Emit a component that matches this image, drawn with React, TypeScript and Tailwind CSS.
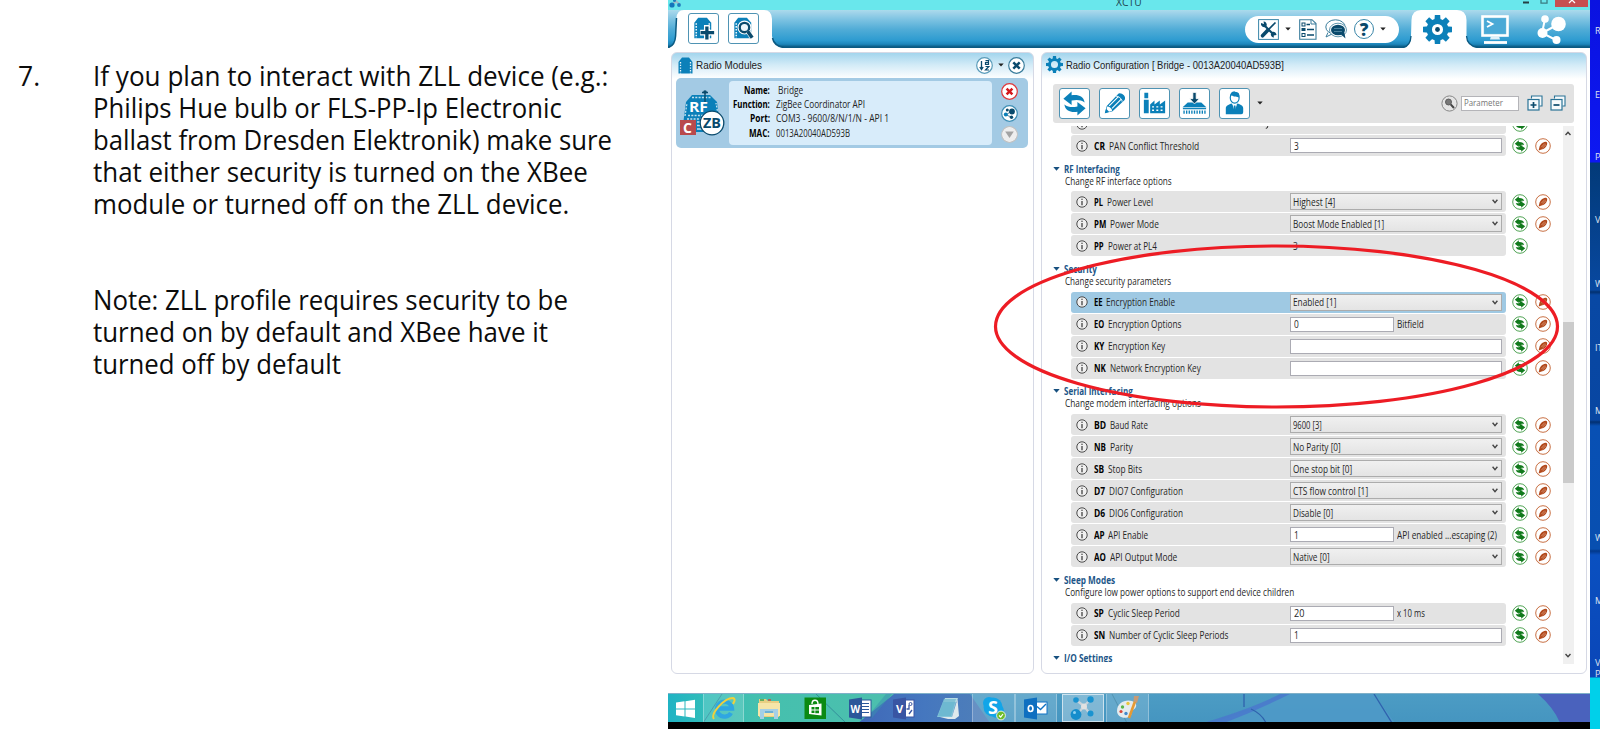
import { useLayoutEffect, useRef, type ReactNode } from 'react';

/** Single-line text condensed or widened horizontally to an exact width. */
function Fit({ w, children, className = '' }: { w: number; children: ReactNode; className?: string }) {
  const ref = useRef<HTMLSpanElement>(null);
  useLayoutEffect(() => {
    const el = ref.current;
    if (el) el.style.transform = `scaleX(${w / el.offsetWidth})`;
  }, [w]);
  return (
    <span className={`block shrink-0 whitespace-pre ${className}`} style={{ width: w }}>
      <span ref={ref} className="inline-block origin-left whitespace-pre">{children}</span>
    </span>
  );
}

const BLUE = '#0b80b9';
const NAVY = '#0a4a6c';

function Gear({ size, hole = 4.6, dot = false }: { size: number; hole?: number; dot?: boolean }) {
  return (
    <svg width={size} height={size} viewBox="-12 -12 24 24" className="shrink-0">
      {[0, 45, 90, 135, 180, 225, 270, 315].map((a) => (
        <path key={a} d="M-2.6 -7 L-2.2 -12 H2.2 L2.6 -7 Z" fill={BLUE} transform={`rotate(${a})`} />
      ))}
      <circle r={(9 + hole) / 2} fill="none" stroke={BLUE} strokeWidth={9 - hole} />
      {dot && <circle r="2" fill={NAVY} />}
    </svg>
  );
}

function Caret({ className = '' }: { className?: string }) {
  return (
    <svg width="6" height="4" viewBox="0 0 6 4" className={`shrink-0 ${className}`}>
      <path d="M0.3 0.5 H5.7 L3 3.6 Z" fill="#222" />
    </svg>
  );
}

function Chip() {
  return (
    <g>
      <path d="M5.500 25 V9 L9.500 3.800 H18.500 L23 9 V25 Z" fill={BLUE} />
      <path d="M7.500 9.500 V25 M21 9.500 V25" stroke="#e8f4fa" strokeWidth="1.6" strokeDasharray="1.6 1.4" />
    </g>
  );
}

function ToolButton({ children }: { children: ReactNode }) {
  return (
    <div className="h-[31px] w-[31px] shrink-0 rounded-[3px] border border-[#4f93b3] bg-white">
      <svg width="29" height="29" viewBox="0 0 30 30">{children}</svg>
    </div>
  );
}

function InfoIcon() {
  return (
    <svg width="12" height="12" viewBox="0 0 12 12" className="shrink-0">
      <circle cx="6" cy="6" r="5.2" fill="#f0f0f0" stroke="#4a4a4a" strokeWidth="1" />
      <path d="M6 5 V9.200" stroke="#333" strokeWidth="1.200" fill="none" />
      <rect x="5.4" y="2.700" width="1.200" height="1.200" fill="#333" />
    </svg>
  );
}

function RefreshIcon() {
  return (
    <svg width="16" height="16" viewBox="0 0 16 16" className="shrink-0">
      <circle cx="8" cy="8" r="7.3" fill="#fff" stroke="#3d9a42" strokeWidth="0.9" />
      <path d="M2.800 5.700 L6.800 2.300 V4 C9.800 3.900 11.800 4.800 12.200 7 C10.500 6.500 8.600 6.800 8.400 7.300 L11.500 8 L7.600 8 L6.800 7.400 V9 Z" fill="#117a1c" />
      <path d="M13.200 10.300 L9.200 13.700 V12 C6.200 12.100 4.200 11.200 3.800 9 C5.500 9.500 7.400 9.200 7.600 8.700 L7 7.400 L9.200 7.600 Z" fill="#117a1c" />
    </svg>
  );
}

function WriteIcon() {
  return (
    <svg width="16" height="16" viewBox="0 0 16 16" className="shrink-0">
      <circle cx="8" cy="8" r="7.3" fill="#fff" stroke="#c2602f" strokeWidth="0.9" />
      <path d="M3.600 12.500 L4.300 9.800 C4.600 7 7.500 4 10.300 3.700 C12.300 3.500 12.500 5 12 6.700 C11.200 9.300 9 11.300 6.500 11.500 Z" fill="#b1491c" />
      <path d="M6.300 9.200 L9.800 5.600 M7.500 10 L11 6.600" stroke="#eebfa6" strokeWidth="0.6" />
    </svg>
  );
}

type Field = {
  code: string;
  cw: number;
  name: string;
  nw: number;
  kind: 'select' | 'input' | 'short' | 'plain';
  value?: string;
  vw?: number;
  unit?: string;
  uw?: number;
  active?: boolean;
};

function Row({ f }: { f: Field }) {
  return (
    <div className="flex h-[22px] shrink-0 items-center pl-[18px]">
      <div
        className={`flex h-[21px] w-[435px] shrink-0 items-center rounded-[3px] pl-[5.5px] ${
          f.active ? 'bg-[#9fc9e3]' : 'bg-[#e3e3e3]'
        }`}
      >
        <InfoIcon />
        <div className="ml-[6px] flex w-[195.5px] shrink-0 gap-[3.5px]">
          <Fit w={f.cw} className="font-bold text-black">{f.code}</Fit>
          <Fit w={f.nw}>{f.name}</Fit>
        </div>
        {f.kind === 'select' && (
          <div className="flex h-[17px] w-[212px] items-center justify-between border border-[#acacac] bg-linear-to-b from-[#f0f0f0] to-[#e4e4e4] pr-[3px] pl-[2px]">
            <Fit w={f.vw!}>{f.value}</Fit>
            <svg width="6" height="5" viewBox="0 0 6 5">
              <path d="M0.6 0.8 L3 3.6 L5.4 0.8" fill="none" stroke="#444" strokeWidth="1.4" />
            </svg>
          </div>
        )}
        {f.kind === 'input' && (
          <div className="flex h-[15px] w-[212px] items-center border border-[#ababb3] bg-white pl-[3px]">
            {f.value && <Fit w={f.vw!}>{f.value}</Fit>}
          </div>
        )}
        {f.kind === 'short' && (
          <>
            <div className="flex h-[15px] w-[104px] items-center border border-[#ababb3] bg-white pl-[3px]">
              <Fit w={f.vw!}>{f.value}</Fit>
            </div>
            <Fit w={f.uw!} className="ml-[3.5px]">{f.unit}</Fit>
          </>
        )}
        {f.kind === 'plain' && <Fit w={f.vw!} className="ml-[3px]">{f.value}</Fit>}
      </div>
      <div className="ml-[6.5px] flex gap-[6.500px]">
        <RefreshIcon />
        {f.kind !== 'plain' && <WriteIcon />}
      </div>
    </div>
  );
}

/** The row above the visible range, of which only the lower edge shows. */
function ScrolledRow() {
  return (
    <div className="flex h-[22px] shrink-0 items-center pl-[18px]">
      <div className="flex h-[21px] w-[435px] shrink-0 items-center rounded-[3px] bg-[#e3e3e3] pl-[5.5px]">
        <InfoIcon />
        <svg width="4" height="12" viewBox="0 0 4 12" className="ml-[177px]">
          <path d="M3.500 6 L2.200 10 L0.800 10.300" fill="none" stroke="#333" />
        </svg>
      </div>
      <div className="ml-[6.500px]"><RefreshIcon /></div>
    </div>
  );
}

function Section({ title, tw, sub, sw, fields = [] }: { title: string; tw: number; sub?: string; sw?: number; fields?: Field[] }) {
  return (
    <>
      <div className="h-[34.4px] shrink-0 pt-[6px]">
        <div className="flex h-[12px] items-center gap-[4.5px]">
          <svg width="7" height="4" viewBox="0 0 7 4"><path d="M0.3 0 H6.7 L3.5 3.8 Z" fill="#17507f" /></svg>
          <Fit w={tw} className="font-bold text-[#1c5688]">{title}</Fit>
        </div>
        {sub && <Fit w={sw!} className="ml-[12.5px] leading-[12px]">{sub}</Fit>}
      </div>
      {fields.map((f) => <Row key={f.code} f={f} />)}
    </>
  );
}

const RF: Field[] = [
  { code: 'PL', cw: 9, name: 'Power Level', nw: 46, kind: 'select', value: 'Highest [4]', vw: 42 },
  { code: 'PM', cw: 12.5, name: 'Power Mode', nw: 49, kind: 'select', value: 'Boost Mode Enabled [1]', vw: 91 },
  { code: 'PP', cw: 10, name: 'Power at PL4', nw: 49, kind: 'plain', value: '3', vw: 5 },
];
const SECURITY: Field[] = [
  { code: 'EE', cw: 8.5, name: 'Encryption Enable', nw: 69, kind: 'select', value: 'Enabled [1]', vw: 43, active: true },
  { code: 'EO', cw: 10.5, name: 'Encryption Options', nw: 73, kind: 'short', value: '0', vw: 5, unit: 'Bitfield', uw: 27 },
  { code: 'KY', cw: 10.5, name: 'Encryption Key', nw: 57, kind: 'input' },
  { code: 'NK', cw: 12, name: 'Network Encryption Key', nw: 91, kind: 'input' },
];
const SERIAL: Field[] = [
  { code: 'BD', cw: 12, name: 'Baud Rate', nw: 38, kind: 'select', value: '9600 [3]', vw: 29 },
  { code: 'NB', cw: 12, name: 'Parity', nw: 23, kind: 'select', value: 'No Parity [0]', vw: 48 },
  { code: 'SB', cw: 10, name: 'Stop Bits', nw: 34, kind: 'select', value: 'One stop bit [0]', vw: 59 },
  { code: 'D7', cw: 11, name: 'DIO7 Configuration', nw: 74, kind: 'select', value: 'CTS flow control [1]', vw: 75 },
  { code: 'D6', cw: 11, name: 'DIO6 Configuration', nw: 74, kind: 'select', value: 'Disable [0]', vw: 40 },
  { code: 'AP', cw: 10.5, name: 'API Enable', nw: 40, kind: 'short', value: '1', vw: 5, unit: 'API enabled ...escaping (2)', uw: 100 },
  { code: 'AO', cw: 12, name: 'API Output Mode', nw: 67, kind: 'select', value: 'Native [0]', vw: 37 },
];
const SLEEP: Field[] = [
  { code: 'SP', cw: 10, name: 'Cyclic Sleep Period', nw: 72, kind: 'short', value: '20', vw: 10, unit: 'x 10 ms', uw: 28 },
  { code: 'SN', cw: 11.5, name: 'Number of Cyclic Sleep Periods', nw: 119.5, kind: 'input', value: '1', vw: 5 },
];

const NOTE: [string, number][] = [
  ['If you plan to interact with ZLL device (e.g.:', 515],
  ['Philips Hue bulb or FLS-PP-Ip Electronic', 469],
  ['ballast from Dresden Elektronik) make sure', 518.5],
  ['that either security is turned on the XBee', 495],
  ['module or turned off on the ZLL device.', 476],
];
const NOTE2: [string, number][] = [
  ['Note: ZLL profile requires security to be', 475],
  ['turned on by default and XBee have it', 454.5],
  ['turned off by default', 248],
];

function Slide() {
  return (
    <div className="flex w-[668px] shrink-0 pt-[60px] pl-[18px] font-['Open_Sans',sans-serif] text-[26.5px] leading-[32px] text-[#0c0c0c]">
      <Fit w={22}>7.</Fit>
      <div className="ml-[53px]">
        {NOTE.map(([t, w]) => <Fit key={t} w={w}>{t}</Fit>)}
        <div className="h-[64px]" />
        {NOTE2.map(([t, w]) => <Fit key={t} w={w}>{t}</Fit>)}
      </div>
    </div>
  );
}

function TitleBar() {
  return (
    <div className="relative flex h-[10px] shrink-0 overflow-hidden bg-[#69e7ec]">
      <svg width="14" height="8" viewBox="0 0 14 8" className="ml-px">
        <path d="M3 5 L7 1 L11 5" stroke="#9fb9c4" strokeWidth="2" fill="none" />
        <circle cx="3" cy="5" r="2.6" fill="#1376ba" /><circle cx="10" cy="5" r="1.9" fill="#1d7fbf" /><circle cx="5.500" cy="0.500" r="1.500" fill="#1d7fbf" />
      </svg>
      <Fit w={26} className="-mt-[7px] ml-[433px] font-['Open_Sans',sans-serif] text-[11.5px] leading-[18px] text-[#1f4a52]">XCTU</Fit>
      <svg width="30" height="8" viewBox="0 0 30 8" className="ml-[380px]">
        <path d="M1 2.5 H7" stroke="#243f44" strokeWidth="2" />
        <path d="M19 0 V3.2 H25 V0" fill="none" stroke="#3a7d82" strokeWidth="1.3" />
      </svg>
      <div className="ml-[3px] flex h-[7px] w-[33px] justify-center bg-[#c75050]">
        <svg width="8" height="4" viewBox="0 0 8 4"><path d="M1 3 L4 0 L7 3" fill="none" stroke="#fff" strokeWidth="1.3" /></svg>
      </div>
    </div>
  );
}

function Ribbon() {
  return (
    <div className="flex h-[38px] shrink-0 bg-[linear-gradient(#a9dcec_0%,#a3d5ea_5%,#7dc3e2_25%,#52add7_50%,#2d9bd0_80%,#1d86bb_90%,#0b5a82_97%,#0b5a82_100%)]">
      <div className="relative flex w-[116px] shrink-0 gap-[9px] pt-[3px] pl-[20px]">
        <svg width="116" height="38" viewBox="0 0 116 38" className="absolute top-0 left-0">
          <path d="M0 38 Q7 36 7.6 26 L8.5 8 Q9 0 16 0 H96 Q103.500 0 104 9 V26 Q105 36 116 38 Z" fill="#fff" />
          <path d="M0 37.500 Q7 36 7.600 26 L8.500 8" fill="none" stroke="#0b5a82" strokeWidth="1.500" />
          <path d="M104.500 28 Q106 36 116 37.500" fill="none" stroke="#0b5a82" strokeWidth="1.500" />
        </svg>
        <div className="relative">
          <ToolButton>
            <Chip />
            <path d="M18.500 11.500 V26.500 M11.500 19.200 H26.500" stroke="#fff" strokeWidth="6" />
            <path d="M18.500 13 V26.500 M12 19.200 H26" stroke={NAVY} strokeWidth="3.400" />
          </ToolButton>
        </div>
        <div className="relative">
          <ToolButton>
            <Chip />
            <circle cx="16" cy="14" r="5" fill="#dff0f8" stroke="#fff" strokeWidth="4.500" />
            <circle cx="16" cy="14" r="4.900" fill="#eef7fb" stroke={NAVY} strokeWidth="2.400" />
            <path d="M19.500 18 L24.500 24.800" stroke="#fff" strokeWidth="5" />
            <path d="M19.300 17.800 L24 24.500" stroke={NAVY} strokeWidth="3.600" />
          </ToolButton>
        </div>
      </div>
      <div className="mt-[5.5px] ml-[460.5px] flex h-[27.500px] w-[154.5px] shrink-0 items-center rounded-full bg-white pl-[13.5px]">
        <svg width="21" height="21" viewBox="0 0 21 21">
          <rect x="0.600" y="0.600" width="19.800" height="19.800" fill="#fff" stroke="#3a86a8" />
          <path d="M5.500 5.500 L16 16" stroke={NAVY} strokeWidth="2.200" />
          <path d="M17.500 3.500 L10 11" stroke={NAVY} strokeWidth="1.700" />
          <path d="M10 11 L4.500 16.800" stroke={NAVY} strokeWidth="3.600" strokeLinecap="round" />
          <path d="M3 4 A3.200 3.200 0 0 0 8.500 7 A3.200 3.200 0 0 0 5.500 2.500 L6 5 Z" fill={NAVY} />
          <path d="M12.800 15 A3.200 3.200 0 0 0 16 18.500 L15.500 16.500 L18.500 16 A3.200 3.200 0 0 0 14.500 12.800 Z" fill={NAVY} />
        </svg>
        <Caret className="ml-[6px]" />
        <svg width="18" height="21" viewBox="0 0 18 21" className="ml-[8px]">
          <path d="M0.700 0.700 H13 L17 4.500 V20.300 H0.700 Z" fill="#fff" stroke="#3a7d9c" strokeWidth="1.100" />
          <path d="M12 0.700 V5 H17" fill="none" stroke="#3a7d9c" />
          <path d="M7.500 5.500 H11 M8 10.500 H15 M8 16 H15" stroke={NAVY} strokeWidth="1.400" />
          <rect x="3" y="4" width="3" height="3" fill="none" stroke={NAVY} /><rect x="2.500" y="9" width="4" height="3" fill={NAVY} /><rect x="3" y="14.500" width="3" height="3" fill="none" stroke={NAVY} />
        </svg>
        <svg width="22" height="20" viewBox="0 0 22 20" className="ml-[8px]">
          <ellipse cx="10.500" cy="8" rx="9.700" ry="7.200" fill="#fff" stroke="#3a7d9c" />
          <path d="M3 13.500 L1 18 L7 15" fill="#fff" stroke="#3a7d9c" />
          <ellipse cx="13" cy="11" rx="8.500" ry="6.800" fill="#fff" stroke="#3a7d9c" strokeWidth="0.800" />
          <ellipse cx="13" cy="11" rx="7" ry="5.300" fill={NAVY} />
          <path d="M15 14.500 L20.500 19.500 L19 12 Z" fill={NAVY} />
          <path d="M9 9.500 H17 M9 12.500 H17" stroke="#5d90aa" strokeWidth="0.800" />
        </svg>
        <div className="ml-[7px] flex h-[20px] w-[20px] items-center justify-center rounded-full border border-[#3a86a8] font-['Open_Sans',sans-serif] text-[17px] leading-none font-extrabold text-[#0a4a6c]">?</div>
        <Caret className="ml-[6px]" />
      </div>
      <div className="relative ml-[4px] w-[75px] shrink-0">
        <svg width="75" height="38" viewBox="0 0 75 38" className="absolute top-0 left-0">
          <path d="M0 38 Q7.500 36 8 26 L8.500 10 Q9 0 18 0 H54 Q63 0 63.500 10 V26 Q64 36 75 38 Z" fill="#fff" />
          <path d="M0 37.500 Q7.500 36 8 26 M63.500 26 Q64 36 75 37.500" fill="none" stroke="#0b5a82" strokeWidth="1.300" />
        </svg>
        <div className="relative mt-[5px] ml-[19.500px]"><Gear size={29} hole={4.600} dot /></div>
      </div>
      <svg width="28" height="30" viewBox="0 0 28 30" className="mt-[5px] ml-[2.500px] shrink-0">
        <rect x="1.500" y="1.500" width="25" height="19" fill="#5fb3d8" stroke="#fff" strokeWidth="2.600" />
        <rect x="3.500" y="3.500" width="21" height="15" fill="#4aa9d6" />
        <path d="M6 6 L11.500 9 L6 12" fill="none" stroke="#fff" strokeWidth="1.800" />
        <path d="M10 21 L9 24.500 H19 L18 21 Z" fill="#dff0f8" /><path d="M3 27.500 H26" stroke="#fff" strokeWidth="2.800" />
      </svg>
      <svg width="30" height="30" viewBox="0 0 30 30" className="mt-[5px] ml-[28px] shrink-0">
        <path d="M8 4 L5 18 L19 25 M5 18 L22 9" stroke="#fff" strokeWidth="2" fill="none" />
        <circle cx="8" cy="4" r="3.800" fill="#fff" /><circle cx="21.500" cy="9" r="7.300" fill="#fff" />
        <circle cx="5.500" cy="18" r="5" fill="#fff" /><circle cx="19.500" cy="25" r="4" fill="#fff" />
      </svg>
    </div>
  );
}

function RoundIcon({ color, children }: { color: string; children: ReactNode }) {
  return (
    <svg width="17" height="17" viewBox="0 0 17 17" className="shrink-0">
      <circle cx="8.500" cy="8.500" r="7.800" fill="#fff" stroke={color} strokeWidth="1.200" />
      {children}
    </svg>
  );
}

function ModulesPanel() {
  return (
    <div className="flex h-[622px] w-[363px] shrink-0 flex-col rounded-[6px] border-[1.5px] border-[#d6d9e5] bg-[linear-gradient(#a2d5ed_0px,#d3ebf7_12px,#fff_26px)] px-[4px]">
      <div className="flex h-[25px] shrink-0 items-center">
        <svg width="15" height="17" viewBox="0 0 15 17" className="ml-[2px] shrink-0">
          <path d="M0.500 16.500 V5 L4 0.500 H11 L14.500 5 V16.500 Z" fill={BLUE} />
          <path d="M2.500 5 V16.500 M12.500 5 V16.500" stroke="#e8f4fa" strokeWidth="1.300" strokeDasharray="1.400 1.300" />
        </svg>
        <Fit w={66} className="ml-[3px] font-['Liberation_Sans',sans-serif] text-[10.5px] text-[#222]">Radio Modules</Fit>
        <div className="-mt-px ml-auto flex items-center">
          <RoundIcon color="#5a9cba">
            <path d="M5.500 4 V12 M3.800 10 L5.500 12.500 L7.200 10" stroke={NAVY} strokeWidth="1.300" fill="none" />
            <path d="M9.500 3.600 H12.500 V7.300 H9.500 V5.500 H12.500 M9.500 9.500 H12.800 L9.500 13 H13" stroke={NAVY} strokeWidth="1.200" fill="none" />
          </RoundIcon>
          <Caret className="ml-[5px]" />
          <div className="mr-[4px] ml-[4.5px]">
            <RoundIcon color="#3a7d9c"><path d="M5.300 5.300 L11.700 11.700 M11.700 5.300 L5.300 11.700" stroke={NAVY} strokeWidth="2.500" /></RoundIcon>
          </div>
        </div>
      </div>
      <div className="flex h-[70px] w-[352px] shrink-0 rounded-[5px] bg-[#a3cae4] py-[3px] font-['Open_Sans',sans-serif]">
        <svg width="46" height="46" viewBox="0 0 46 46" className="mt-[9px] ml-[2.5px] shrink-0">
          <path d="M3 42 L7 12 L13 5 H31 L38 12 L42 42 Z" fill={BLUE} />
          <path d="M6 26 L8 13 M39 24 L37 13 M13 7.500 H32 M9 25.500 H29 M8 29 H22" stroke="#c3e0ee" strokeWidth="1.300" strokeDasharray="2 1.300" />
          <path d="M18 32 H24 M18 35.500 H24 M18 39 H24" stroke="#c3e0ee" strokeWidth="1.300" />
          <path d="M26 14 V2 M23 2.500 H29" stroke={NAVY} strokeWidth="1.400" /><circle cx="26" cy="2" r="1.800" fill={NAVY} />
          <text x="10" y="22" fontFamily="Open Sans" fontWeight="700" fontSize="13.500" fill="#fff" textLength="19" lengthAdjust="spacingAndGlyphs">RF</text>
          <rect x="1" y="30" width="16" height="15" fill="#b94a4c" />
          <text x="4" y="43" fontFamily="Open Sans" fontWeight="700" fontSize="14" fill="#fff">C</text>
          <circle cx="33" cy="33" r="11.800" fill="#fff" stroke={NAVY} strokeWidth="1.300" />
          <text x="24" y="38" fontFamily="Open Sans" fontWeight="700" fontSize="13.500" fill={NAVY} textLength="18" lengthAdjust="spacingAndGlyphs">ZB</text>
        </svg>
        <div className="ml-[4.5px] flex h-[64px] w-[263px] gap-[5.5px] rounded-[4px] bg-[#d8ecfa] pt-[2px] pl-[4px] text-[10px] leading-[14.200px] text-[#222]">
          <div className="flex w-[37px] flex-col items-end font-bold text-black">
            <Fit w={26}>Name:</Fit><Fit w={37}>Function:</Fit><Fit w={20}>Port:</Fit><Fit w={21}>MAC:</Fit>
          </div>
          <div>
            <Fit w={25} className="ml-[2px]">Bridge</Fit><Fit w={89}>ZigBee Coordinator API</Fit><Fit w={113}>COM3 - 9600/8/N/1/N - API 1</Fit><Fit w={74}>0013A20040AD593B</Fit>
          </div>
        </div>
        <div className="ml-[9px] flex flex-col gap-[4.5px] pt-[2px]">
          <RoundIcon color="#e0383a"><path d="M5.600 5.600 L11.400 11.400 M11.400 5.600 L5.600 11.400" stroke="#d3181c" strokeWidth="2.500" /></RoundIcon>
          <RoundIcon color="#3f8fb5">
            <path d="M5 10 L10.500 6 M5 10 L10.500 12" stroke={NAVY} strokeWidth="0.700" />
            <circle cx="6.300" cy="5" r="1.500" fill={NAVY} /><circle cx="11" cy="6.500" r="2.900" fill={NAVY} />
            <circle cx="4.800" cy="9.600" r="2" fill={BLUE} /><circle cx="10.500" cy="12.300" r="1.700" fill={NAVY} />
          </RoundIcon>
          <RoundIcon color="#c2c2c2"><circle cx="8.500" cy="8.500" r="7" fill="#eee" /><path d="M4.200 5.500 H12.800 L8.500 12 Z" fill="#a3a3a3" /></RoundIcon>
        </div>
      </div>
    </div>
  );
}

function ConfigPanel() {
  return (
    <div className="flex h-[622px] w-[546px] shrink-0 flex-col rounded-[6px] border-[1.5px] border-[#d6d9e5] bg-[linear-gradient(#a2d5ed_0px,#d3ebf7_12px,#fff_26px)] pl-[10.5px]">
      <div className="-ml-[6.5px] flex h-[31px] shrink-0 items-start pt-[2.5px]">
        <Gear size={17} hole={5} />
        <Fit w={218} className="ml-[2.5px] font-['Liberation_Sans',sans-serif] text-[10.5px] leading-[18px] text-[#222]">Radio Configuration [ Bridge - 0013A20040AD593B]</Fit>
      </div>
      <div className="flex h-[38.500px] w-[521px] shrink-0 items-center rounded-[3px] bg-[#e2e2e2] pl-[6.5px]">
        <div className="flex gap-[9px]">
          <ToolButton>
            <path d="M3.500 10.500 L12 3 V7 C19 6 24.500 8 25.500 14.500 C21.500 11.500 17 11.500 12 12.500 V17 Z" fill={BLUE} transform="translate(0 -0.500)" />
            <path d="M26.500 19.500 L18 27 V23 C11 24 5.500 22 4.500 15.500 C8.500 18.500 13 18.500 18 17.500 V13 Z" fill={BLUE} transform="translate(0 0.500)" />
          </ToolButton>
          <ToolButton>
            <path d="M5 25 L7 17.500 L18.500 5.500 C20 2.500 28 6.500 25.500 11.500 L13 23 Z" fill={BLUE} />
            <path d="M9.500 17.500 L19 8 M12.500 20 L22 10.500" stroke="#fff" strokeWidth="1.100" />
            <path d="M16.500 7.500 C18.500 7 23 10 22.800 13" stroke="#fff" strokeWidth="1" fill="none" />
            <path d="M7.500 18 C10 18 12.500 20.500 12.500 22.500 L8 24 L6.500 22 Z" fill="#fff" /><path d="M5 25 L6.300 20.500 L9.500 23.500 Z" fill={BLUE} />
          </ToolButton>
          <ToolButton>
            <path d="M4 25 V11 H9 V25 Z M4.500 9.500 V4 H8.500 V9.500 Z" fill={BLUE} />
            <path d="M10.500 25 V16 L15 12 V16 L20.500 12 V16 L26 12 V25 Z" fill={BLUE} />
            <path d="M12.500 18.500 H24.500 M12.500 22 H24.500" stroke="#fff" strokeWidth="1.500" strokeDasharray="2 2.400" />
          </ToolButton>
          <ToolButton>
            <path d="M3 18.500 L8 14 H22 L27 18.500 V21 H3 Z" fill={BLUE} />
            <path d="M3.500 24 H26.500" stroke={BLUE} strokeWidth="3.400" strokeDasharray="1.400 1.300" />
            <path d="M3 19.200 H27" stroke="#fff" strokeWidth="0.700" />
            <path d="M13.300 3.500 H16.700 V10 H20 L15 15.500 L10 10 H13.300 Z" fill={NAVY} stroke="#fff" strokeWidth="0.800" />
          </ToolButton>
          <ToolButton>
            <path d="M6 26 V20 C6 17 9.500 16 12 15 L15 19 L18 15 C21 16 24 17 24 20 V24 Q24 26 22 26 Z" fill={BLUE} />
            <path d="M13 16 L15 23 L17.500 16 Z" fill="#fff" /><path d="M14.300 17 H16 L16.500 22 L15.200 24 L14 22 Z" fill={BLUE} />
            <ellipse cx="15.200" cy="9" rx="4.600" ry="5.600" fill="#fff" stroke={BLUE} strokeWidth="1.200" />
            <path d="M10.500 9 C10 3 14 2 16 3 C20 3 20.500 6 19.800 9 C18 7.500 14 8.500 12 6.500 Z" fill={BLUE} />
          </ToolButton>
        </div>
        <Caret className="ml-[7px]" />
        <svg width="17" height="17" viewBox="0 0 17 17" className="ml-[177.500px]">
          <circle cx="8.500" cy="8.500" r="7.600" fill="#e4e4e4" stroke="#888" />
          <circle cx="7.500" cy="7" r="3" fill="#777" stroke="#555" strokeWidth="0.900" /><path d="M9.700 9.300 L13 13" stroke="#444" strokeWidth="2" />
        </svg>
        <div className="ml-[3px] flex h-[15px] w-[58px] items-center border border-[#b4b4b8] bg-white pl-[2px] font-['Open_Sans',sans-serif] text-[9.5px] text-[#757575]"><Fit w={39}>Parameter</Fit></div>
        {['M3.500 10 H9.500 M6.500 7 V13', 'M3.500 10 H9.500'].map((d) => (
          <svg key={d} width="16" height="16" viewBox="0 0 16 16" className="ml-[8.5px] last:ml-[6.5px]">
            <path d="M4.500 3.500 V1 H15 V11 H12.500" fill="#f6fafc" stroke="#2a7396" strokeWidth="1.100" />
            <rect x="1" y="4.500" width="11" height="10.500" fill="#f6fafc" stroke="#2a7396" strokeWidth="1.200" />
            <path d={d} stroke={NAVY} strokeWidth="1.700" />
          </svg>
        ))}
      </div>
      <div className="mt-[3.5px] flex h-[538px] w-[521px] shrink-0 overflow-hidden font-['Open_Sans',sans-serif] text-[10px] leading-[12px] text-[#262626]">
        <div className="-mt-[13.500px] flex h-[549px] w-[510px] flex-col overflow-hidden">
          <ScrolledRow />
          <Row f={{ code: 'CR', cw: 11, name: 'PAN Conflict Threshold', nw: 90, kind: 'input', value: '3', vw: 5 }} />
          <Section title="RF Interfacing" tw={56} sub="Change RF interface options" sw={107} fields={RF} />
          <Section title="Security" tw={33} sub="Change security parameters" sw={106} fields={SECURITY} />
          <Section title="Serial Interfacing" tw={69} sub="Change modem interfacing options" sw={136} fields={SERIAL} />
          <Section title="Sleep Modes" tw={51} sub="Configure low power options to support end device children" sw={229} fields={SLEEP} />
          <Section title="I/O Settings" tw={48} />
        </div>
        <div className="flex w-[11px] flex-col items-center bg-[#f0f0f0] pt-[5px]">
          <svg width="6" height="5" viewBox="0 0 6 5" className="shrink-0"><path d="M0.500 4 L3 1.200 L5.500 4" fill="none" stroke="#444" strokeWidth="1.400" /></svg>
          <div className="mt-[186px] h-[161px] w-[11px] shrink-0 bg-[#cbcbcb]" />
          <svg width="6" height="5" viewBox="0 0 6 5" className="mt-[170px] shrink-0"><path d="M0.500 1 L3 3.800 L5.500 1" fill="none" stroke="#444" strokeWidth="1.400" /></svg>
        </div>
      </div>
    </div>
  );
}

function Task({ w, on = '', children }: { w: number; on?: string; children: ReactNode }) {
  return (
    <div className={`relative flex h-[28px] shrink-0 items-center justify-center ${on}`} style={{ width: w }}>
      <svg width="26" height="26" viewBox="0 0 26 26">{children}</svg>
    </div>
  );
}

function Taskbar() {
  const lit = 'border-x border-white/30 bg-white/15';
  return (
    <div className="relative flex h-[29px] shrink-0 overflow-hidden border-t border-[#7fb0c8]">
      <svg width="922" height="29" viewBox="0 0 922 29" className="absolute top-0 left-0">
        <defs>
          <linearGradient id="tb"><stop offset="0" stopColor="#20b3c4" /><stop offset="0.150" stopColor="#30bcba" /><stop offset="0.400" stopColor="#45c0ae" /><stop offset="1" stopColor="#4dbfae" /></linearGradient>
          <linearGradient id="tb2"><stop offset="0" stopColor="#3f68b8" /><stop offset="0.500" stopColor="#4577bf" /><stop offset="1" stopColor="#4f7fb8" /></linearGradient>
          <linearGradient id="tb3" x1="0" y1="0" x2="0" y2="1"><stop offset="0" stopColor="#4c9cc4" /><stop offset="1" stopColor="#4595c0" /></linearGradient>
        </defs>
        <rect width="922" height="29" fill="url(#tb3)" />
        <rect width="230" height="29" fill="url(#tb)" />
        <path d="M190 29 Q204 18 226 0 H302 L322 29 Z" fill="url(#tb2)" />
        <path d="M204 24 L224 0 H218 L200 22 Z" fill="#3a8fb0" opacity="0.500" />
        <path d="M35 29 L54 0 M148 0 L178 29 M444 0 L459 29" stroke="#27708f" strokeWidth="1" opacity="0.600" />
        <path d="M543 29 Q590 15 618 0 H706 L727 29 Z" fill="#4f9ac8" opacity="0.800" />
        <path d="M535 29 Q585 14 612 0 H622 Q590 16 556 29 Z" fill="#4a78cc" opacity="0.850" />
        <path d="M576 0 V13 M583 15 Q594 20 598 29 M706 0 L724 29" stroke="#2f62ad" strokeWidth="1.300" fill="none" />
        <path d="M870 0 Q886 14 892 29 H922 V0 Z" fill="#4a62bd" />
      </svg>
      <Task w={35}><path d="M3 7.500 L11.500 6.300 V13.400 H3 Z M12.500 6.200 L22 4.700 V13.400 H12.500 Z M3 14.400 H11.500 V21.500 L3 20.300 Z M12.500 14.400 H22 V23 L12.500 21.600 Z" fill="#fff" /></Task>
      <Task w={41} on={lit}>
        <path d="M20 18 A7.500 7.500 0 1 1 21 13.500 H8" fill="none" stroke="#2fa6e2" strokeWidth="4.300" />
        <path d="M3 24 C-1 19 13 3 22 3 C25 4 23 7 22 9" fill="none" stroke="#f0d03c" strokeWidth="2" />
      </Task>
      <Task w={50}>
        <path d="M3 4 H10 L12 6 H23 V22 H3 Z" fill="#e8cf82" /><path d="M2 8 H24 V21 H2 Z" fill="#f5e5a8" />
        <path d="M4 5 H8" stroke="#3da24e" strokeWidth="1.500" /><path d="M12 5 H15" stroke="#d3493c" strokeWidth="1.500" />
        <path d="M6 24 V16 H20 V24" fill="none" stroke="#a4cfe6" strokeWidth="4" /><path d="M9 17 H17" stroke="#5aa7d0" strokeWidth="1.500" />
      </Task>
      <Task w={42}>
        <rect x="2.500" y="2.500" width="21.500" height="21.500" fill="#0b8a12" /><path d="M7 10 L19.500 8.500 V20.500 L7 19 Z" fill="#fff" />
        <path d="M10 9 C10 4 16 4 16 9" fill="none" stroke="#fff" strokeWidth="1.400" />
        <path d="M9.500 12 H12.500 V14.500 H9.500 Z M13.300 12 H17 V14.500 H13.300 Z M9.500 15.400 H12.500 V18 H9.500 Z M13.300 15.400 H17 V18.300 H13.300 Z" fill="#0b8a12" />
      </Task>
      <Task w={48}>
        <rect x="12" y="5" width="12" height="17" fill="#fff" stroke="#2b579a" /><path d="M15 8.500 H22 M15 11.500 H22 M15 14.500 H22 M15 17.500 H22" stroke="#2b579a" strokeWidth="1.200" />
        <path d="M2 4.500 L15 2.500 V24.500 L2 22.500 Z" fill="#2b579a" />
        <text x="3.500" y="17.500" fontFamily="Open Sans" fontWeight="700" fontSize="10" fill="#fff">W</text>
      </Task>
      <Task w={42}>
        <rect x="12" y="5" width="10" height="17" fill="#fff" stroke="#3955a3" /><path d="M14.500 14 L17 14 V10 M17 19 L20 15" stroke="#3955a3" strokeWidth="1.300" fill="none" /><circle cx="18.500" cy="9" r="1.500" fill="none" stroke="#3955a3" />
        <path d="M1 4.500 L14 2.500 V24.500 L1 22.500 Z" fill="#3955a3" />
        <text x="4" y="17.500" fontFamily="Open Sans" fontWeight="700" fontSize="11" fill="#fff">V</text>
      </Task>
      <Task w={46}>
        <path d="M8 4 H21 L16 22 H1 Z" fill="#86c5da" /><path d="M9 3 H22 L20.500 7 H7.500 Z" fill="#b7dce4" /><path d="M4 22 H16 L21.500 4 L23 21 L19 24 H12 Z" fill="#dfe9ec" />
        <path d="M8 4 H20 L15 21 H2 Z" fill="#5fb0cc" opacity="0.600" />
      </Task>
      <Task w={43} on={lit}>
        <circle cx="8" cy="8" r="6" fill="#12a5e8" /><circle cx="16" cy="16" r="7" fill="#12a5e8" /><circle cx="12" cy="12" r="9.500" fill="#12a5e8" />
        <text x="7" y="18.500" fontFamily="Open Sans" fontWeight="700" fontSize="18" fill="#fff">S</text>
        <circle cx="20" cy="20.500" r="4.400" fill="#6fbd2b" stroke="#fff" strokeWidth="0.800" /><path d="M18 20.500 L19.700 22 L22 19" stroke="#fff" strokeWidth="1.200" fill="none" />
      </Task>
      <Task w={42} on={lit}>
        <rect x="12" y="7" width="12" height="12" fill="#fff" stroke="#1173c5" /><path d="M14 11.500 L17.500 14.500 L23 9" stroke="#1173c5" strokeWidth="1.400" fill="none" />
        <path d="M1 4.500 L14 2.500 V24.500 L1 22.500 Z" fill="#0f6fc0" />
        <ellipse cx="7.600" cy="13.500" rx="2.300" ry="3" fill="none" stroke="#fff" strokeWidth="1.700" />
      </Task>
      <div className="w-[5px] shrink-0" />
      <Task w={42} on="border border-white/60 bg-white/30">
        <path d="M6 5 L14 11 L20 5 M6 21 L14 11 L20 19" stroke="#c9d3da" strokeWidth="2.200" fill="none" />
        <circle cx="14" cy="11.500" r="3" fill="#e1e1e1" /><circle cx="6" cy="5" r="2.800" fill="#1a93d0" /><circle cx="20.500" cy="4.500" r="3.200" fill="#1a93d0" />
        <circle cx="6" cy="19.500" r="5.400" fill="#168dcc" /><circle cx="20.500" cy="18.500" r="3" fill="#1a93d0" /><circle cx="4.500" cy="17.500" r="1.500" fill="#8ed2f2" />
      </Task>
      <div className="w-[2px] shrink-0" />
      <Task w={43} on={lit}>
        <path d="M2 16 C2 8 10 4 17 6 C23 8 22 13 18 15 C15 17 18 19 15 21 C10 25 2 22 2 16 Z" fill="#e4ebee" />
        <circle cx="7.500" cy="12" r="1.700" fill="#58b54a" /><circle cx="13" cy="8.500" r="1.700" fill="#e9c53b" /><circle cx="6" cy="16.500" r="1.600" fill="#d8463c" /><circle cx="11" cy="18.500" r="1.700" fill="#4188cc" />
        <path d="M20.500 5 L14 23" stroke="#e59a35" strokeWidth="2.600" /><path d="M18.500 6 L19 1 L24 1 L22 8 Z" fill="#c79b75" />
      </Task>
    </div>
  );
}

function DesktopEdge() {
  const labels: [string, number][] = [['R', 31], ['E', 95], ['P', 157], ['V', 220], ['W', 284], ['IT', 348], ['M', 411], ['W', 538], ['M', 601], ['V', 663], ['P', 674]];
  return (
    <div className="relative h-[729px] w-[10px] shrink-0 overflow-hidden bg-[linear-gradient(#0a12e0_0px,#0d18f2_162px,#023a78_163px,#0848a0_290px,#02306e_292px,#0848a4_295px,#0846a2_420px,#022f70_422px,#0850b4_426px,#084fb0_549px,#02388a_551px,#0a50c0_555px,#0a46b8_677px,#00d0ea_678px)]">
      {labels.map(([t, y]) => (
        <span key={y} className="absolute left-[5px] font-['Open_Sans',sans-serif] text-[9px] leading-[12px] text-[#dfe4f2]" style={{ top: y - 6 }}>{t}</span>
      ))}
    </div>
  );
}

export default function App() {
  return (
    <div className="relative flex h-[729px] w-[1600px] overflow-hidden bg-white">
      <Slide />
      <div className="flex w-[922px] shrink-0 flex-col">
        <TitleBar />
        <Ribbon />
        <div className="flex h-[645px] shrink-0 gap-[7px] pt-[4px] pl-[3px]">
          <ModulesPanel />
          <ConfigPanel />
        </div>
        <Taskbar />
        <div className="h-[7px] bg-black" />
      </div>
      <DesktopEdge />
      <svg width="570" height="170" viewBox="0 0 570 170" className="pointer-events-none absolute top-[242px] left-[992px]">
        <ellipse cx="284.500" cy="84.500" rx="281" ry="80.500" fill="none" stroke="#ed1c24" strokeWidth="3.200" />
      </svg>
    </div>
  );
}
